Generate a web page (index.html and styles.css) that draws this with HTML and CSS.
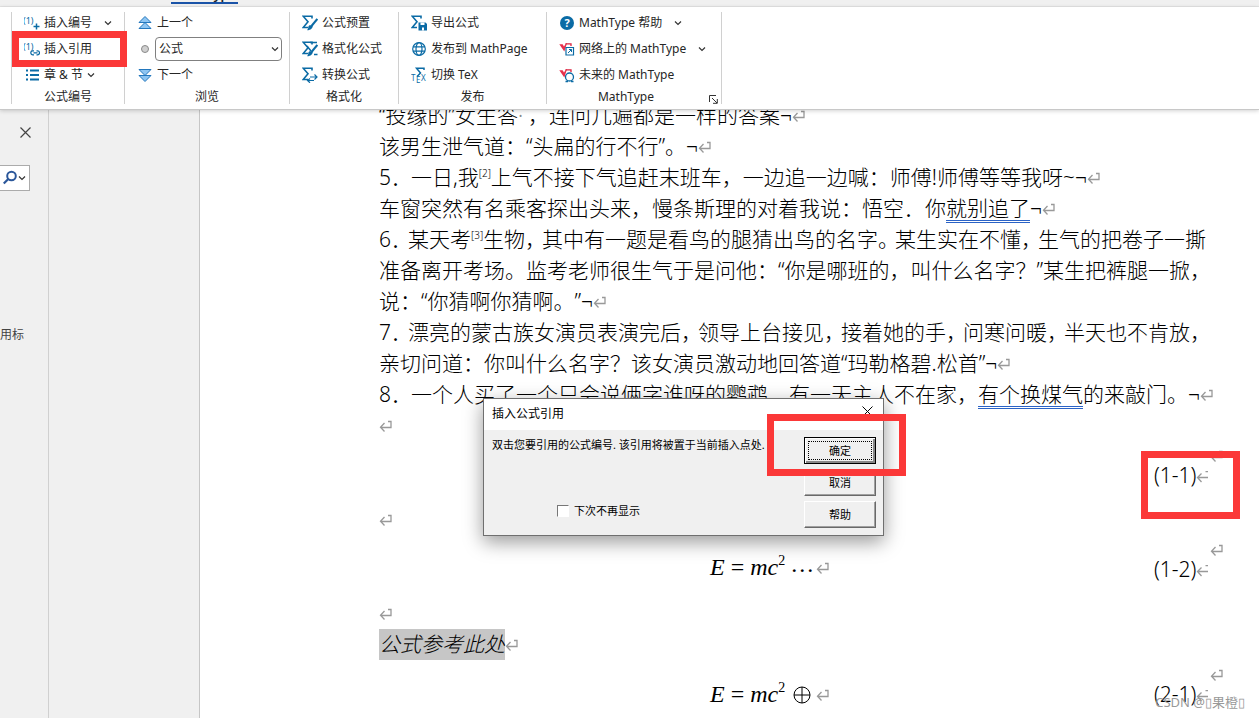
FILE: index.html
```
<!DOCTYPE html>
<html lang="zh-CN">
<head>
  <meta charset="UTF-8">
  <meta name="viewport" content="width=device-width, initial-scale=1.0">
  <title>插入公式引用</title>
  <link rel="stylesheet" href="styles.css">
</head>
<body>
  <!-- shared icon shapes -->
  <svg class="defs" aria-hidden="true">
    <symbol id="chevron" viewBox="0 0 8 8"><path d="M1 2.5 4 5.5 7 2.5" fill="none" stroke="#333" stroke-width="1.2"/></symbol>
    <symbol id="return" viewBox="0 0 13 13"><path d="M9 1.5h3v6H1.5M5.5 3 1.5 7.3 5.5 11.5" fill="none" stroke="#999" stroke-width="1.3"/></symbol>
    <symbol id="cell-end" viewBox="0 0 13 13"><path d="M12 7.5H1.5M5.5 3.5 1.5 7.5 5.5 12M9.5 1.7h2.5" fill="none" stroke="#999" stroke-width="1.3"/></symbol>
    <symbol id="sigma" viewBox="0 0 16 16"><path d="M10 3.5V1.2H1.2L6 6.8 1.2 12.5H6" fill="none" stroke="#0b6ba5" stroke-width="1.6"/></symbol>
    <symbol id="brush" viewBox="0 0 16 16"><path d="M15.3 4 9.5 11" stroke="#0b6ba5" stroke-width="2"/><path d="M9.8 10.3c1.6 1 .8 2.4-.6 3.8-1.5 1.3-3.2 1.2-4.2.9C7 14 5.5 11.5 7.5 10.3z" fill="#0b6ba5"/></symbol>
    <symbol id="root" viewBox="0 0 16 16"><path d="M.3 3.2H3.6L5 5.5 7 2.2H8L5.300 10.500z" fill="#e8304c"/><path d="M6.500 2.800H12V5" fill="none" stroke="#dc2440" stroke-width="1.300"/></symbol>
  </svg>

  <nav class="tabs"><a href="#" class="tab">MathType</a></nav>

  <header class="ribbon">
    <section class="group numbering">
      <button class="cmd">
        <svg class="icon" viewBox="0 0 16 16"><text x="-1" y="9" class="glyph">(1)</text><path d="M12.500 8.500v6M9.500 11.500h6" stroke="#0b6ba5" stroke-width="1.500"/></svg>
        <span>插入编号</span><svg class="chevron far"><use href="#chevron"/></svg>
      </button>
      <button class="cmd">
        <svg class="icon" viewBox="0 0 16 16"><text x="-1" y="9" class="glyph">(1)</text><path d="M10 13.800H8.800a2 2 0 0 1 0-4H10M12.500 9.800h1a2 2 0 0 1 0 4h-1M9.500 11.800h4" fill="none" stroke="#0b6ba5" stroke-width="1.200"/></svg>
        <span>插入引用</span>
        <span class="callout callout-cmd"></span>
      </button>
      <button class="cmd">
        <svg class="icon" viewBox="0 0 16 16"><path d="M2 3.500h2M2 8h2M2 12.500h2M6 3.500h9M6 8h9M6 12.500h9" stroke="#0b6ba5" stroke-width="1.800"/></svg>
        <span>章 &amp; 节</span><svg class="chevron"><use href="#chevron"/></svg>
      </button>
      <h2>公式编号</h2>
    </section>

    <section class="group browse">
      <button class="cmd">
        <svg class="icon" viewBox="0 0 16 16"><path d="M8 1.500 14 7.500H2zM8 7.500 14 13.500H2z" fill="#8ec5f2" stroke="#2377bd"/></svg>
        <span>上一个</span>
      </button>
      <div class="cmd pick">
        <svg class="icon" viewBox="0 0 16 16"><circle cx="8" cy="8" r="3.500" fill="#d0d0d0" stroke="#8a8a8a"/></svg>
        <select aria-label="浏览对象"><option>公式</option></select>
        <svg class="chevron"><use href="#chevron"/></svg>
      </div>
      <button class="cmd">
        <svg class="icon" viewBox="0 0 16 16"><path d="M2 2.500H14L8 8.500zM2 8.500H14L8 14.500z" fill="#8ec5f2" stroke="#2377bd"/></svg>
        <span>下一个</span>
      </button>
      <h2>浏览</h2>
    </section>

    <section class="group format">
      <button class="cmd">
        <svg class="icon" viewBox="0 0 16 16"><use href="#sigma"/><use href="#brush"/></svg>
        <span>公式预置</span>
      </button>
      <button class="cmd">
        <svg class="icon" viewBox="0 0 16 16"><use href="#sigma"/><path d="M8 1.500h7M12 13.500h3.500M5 5l4 5" stroke="#0b6ba5" stroke-width="1.500"/><use href="#brush"/></svg>
        <span>格式化公式</span>
      </button>
      <button class="cmd">
        <svg class="icon" viewBox="0 0 16 16"><use href="#sigma"/><path d="M8 10h7M12.500 7.500 15 10l-2.500 2.500M12 13.500H5.500M8 11.500l-2.500 2 2.500 2.300" fill="none" stroke="#0b6ba5" stroke-width="1.200"/></svg>
        <span>转换公式</span>
      </button>
      <h2>格式化</h2>
    </section>

    <section class="group publish">
      <button class="cmd">
        <svg class="icon" viewBox="0 0 16 16"><use href="#sigma"/><path d="M7.500 7.500h7l1.500 1.500v6.500H7.500z" fill="#0b6ba5"/><path d="M9.500 7.500h4v2.500h-4zM11 12.500h2v3h-2z" fill="#fff"/></svg>
        <span>导出公式</span>
      </button>
      <button class="cmd">
        <svg class="icon" viewBox="0 0 16 16"><g fill="none" stroke="#0b6ba5" stroke-width="1.200"><circle cx="8" cy="8" r="6.300"/><ellipse cx="8" cy="8" rx="3" ry="6.300"/><path d="M2 5.800h12M2 10.200h12"/></g></svg>
        <span>发布到 MathPage</span>
      </button>
      <button class="cmd">
        <svg class="icon" viewBox="0 0 16 16"><path d="M13 3V1.200H5.500l4 4.800-3.500 3.500" fill="none" stroke="#0b6ba5" stroke-width="1.500"/><text x="0" y="14" class="glyph tex">T</text><text x="5" y="16" class="glyph tex">E</text><text x="10" y="14" class="glyph tex">X</text></svg>
        <span>切换 TeX</span>
      </button>
      <h2>发布</h2>
    </section>

    <section class="group help">
      <button class="cmd">
        <svg class="icon" viewBox="0 0 16 16"><circle cx="8" cy="8" r="7" fill="#0b6ba5"/><text x="8" y="12" text-anchor="middle" class="question">?</text></svg>
        <span>MathType 帮助</span><svg class="chevron far"><use href="#chevron"/></svg>
      </button>
      <button class="cmd">
        <svg class="icon" viewBox="0 0 16 16"><use href="#root"/><path d="M7 6.500h7.500V14H7z" fill="#fff" stroke="#0b6ba5" stroke-width="1.200"/><path d="M9 12 12.500 8.500M10 8.500h2.500v2.500" fill="none" stroke="#0b6ba5"/></svg>
        <span>网络上的 MathType</span><svg class="chevron far"><use href="#chevron"/></svg>
      </button>
      <button class="cmd">
        <svg class="icon" viewBox="0 0 16 16"><use href="#root"/><circle cx="10.500" cy="10" r="4" fill="#fff" stroke="#0b6ba5" stroke-width="1.300"/><path d="M6.500 14.500h2.500M12 14.500h2.500" stroke="#0b6ba5" stroke-width="1.400"/></svg>
        <span>未来的 MathType</span>
      </button>
      <h2>MathType</h2>
      <svg class="launcher" viewBox="0 0 9 9"><path d="M.5 7V.5H7M3 3l5 5M8.300 4v4.300H4" fill="none" stroke="#333"/></svg>
    </section>
  </header>

  <main class="workspace">
    <aside class="nav-pane">
      <button class="close" aria-label="关闭"><svg viewBox="0 0 11 11"><path d="M.5.5l10 10M10.500.5l-10 10" stroke="#444" stroke-width="1.200"/></svg></button>
      <button class="search" aria-label="搜索">
        <svg class="icon" viewBox="0 0 16 16"><circle cx="9.500" cy="6" r="4.300" fill="none" stroke="#2b579a" stroke-width="2"/><path d="M6.300 9 1.800 13.500" stroke="#2b579a" stroke-width="2.200"/></svg>
        <svg class="chevron"><use href="#chevron"/></svg>
      </button>
      <p>用标</p>
    </aside>
    <div class="gutter"></div>

    <article class="page">
      <p>“投缘的”女生答<span class="dot">·</span>，连问几遍都是一样的答案¬<svg class="mark"><use href="#return"/></svg></p>
      <p>该男生泄气道：“头扁的行不行”。¬<svg class="mark"><use href="#return"/></svg></p>
      <p><span class="num">5．</span>一日,我<sup>[2]</sup>上气不接下气追赶末班车，一边追一边喊：师傅!师傅等等我呀~¬<svg class="mark"><use href="#return"/></svg></p>
      <p>车窗突然有名乘客探出头来，慢条斯理的对着我说：悟空．你<u>就别追了</u>¬<svg class="mark"><use href="#return"/></svg></p>
      <p><span class="num tight">6．</span>某天考<sup>[3]</sup>生物<span class="stop">，</span>其中有一题是看鸟的腿猜出鸟的名字<span class="stop">。</span>某生实在不懂<span class="stop">，</span>生气的把卷子一撕</p>
      <p>准备离开考场。监考老师很生气于是问他：“你是哪班的，叫什么名字？”某生把裤腿一掀，</p>
      <p>说：“你猜啊你猜啊。”¬<svg class="mark"><use href="#return"/></svg></p>
      <p><span class="num tight">7．</span>漂亮的蒙古族女演员表演完后<span class="stop">，</span>领导上台接见<span class="stop">，</span>接着她的手<span class="stop">，</span>问寒问暖<span class="stop">，</span>半天也不肯放<span class="stop">，</span></p>
      <p>亲切问道：你叫什么名字？该女演员激动地回答道“玛勒格碧.松首”¬<svg class="mark"><use href="#return"/></svg></p>
      <p><span class="num">8．</span>一个人买了一个只会说俩字谁呀的鹦鹉，有一天主人不在家，<u>有个换煤气</u>的来敲门。¬<svg class="mark"><use href="#return"/></svg></p>
      <p><svg class="mark"><use href="#return"/></svg></p>
      <div class="equation">
        <span></span>
        <span class="number">(1-1)<svg class="mark"><use href="#cell-end"/></svg></span>
        <svg class="mark row-end"><use href="#return"/></svg>
        <span class="callout callout-number"></span>
      </div>
      <p><svg class="mark"><use href="#return"/></svg></p>
      <div class="equation">
        <span class="formula"><i>E</i> = <i>mc</i><sup>2</sup><span class="dots">···</span><svg class="mark"><use href="#return"/></svg></span>
        <span class="number">(1-2)<svg class="mark"><use href="#cell-end"/></svg></span>
        <svg class="mark row-end"><use href="#return"/></svg>
      </div>
      <p><svg class="mark"><use href="#return"/></svg></p>
      <p><mark>公式参考此处</mark><svg class="mark"><use href="#return"/></svg></p>
      <div class="equation">
        <span class="formula"><i>E</i> = <i>mc</i><sup>2</sup><svg class="oplus" viewBox="0 0 18 18"><path d="M9 1v16M1 9h16" stroke="#000"/><circle cx="9" cy="9" r="8" fill="none" stroke="#000"/></svg><svg class="mark"><use href="#return"/></svg></span>
        <span class="number">(2-1)<svg class="mark"><use href="#cell-end"/></svg></span>
        <svg class="mark row-end"><use href="#return"/></svg>
      </div>
    </article>

    <div class="dialog" role="dialog" aria-labelledby="dialog-title">
      <div class="title-bar">
        <h1 id="dialog-title">插入公式引用</h1>
        <button class="close" aria-label="关闭"><svg viewBox="0 0 11 11"><path d="M.5.5l10 10M10.500.5l-10 10" stroke="#000"/></svg></button>
      </div>
      <div class="dialog-body">
        <div class="message">
          <p>双击您要引用的公式编号. 该引用将被置于当前插入点处.</p>
          <label><input type="checkbox"> 下次不再显示</label>
        </div>
        <div class="actions">
          <button class="default">确定</button>
          <button>取消</button>
          <button>帮助</button>
        </div>
      </div>
      <span class="callout callout-ok"></span>
    </div>

    <div class="watermark">CSDN @▯果橙▯</div>
  </main>
</body>
</html>
```
FILE: styles.css
```
* {
  box-sizing: border-box;
}
body {
  margin: 0;
  height: 100vh;
  display: flex;
  flex-direction: column;
  overflow: hidden;
  background: #fff;
  color: #262626;
  font: 12px/16px "Noto Sans", "Noto Sans CJK SC", sans-serif;
}
h1, h2, p {
  margin: 0;
  font-size: inherit;
  font-weight: normal;
}
button {
  border: 0;
  padding: 0;
  background: none;
  color: inherit;
  font: inherit;
}
.defs {
  position: absolute;
  width: 0;
  height: 0;
}
.icon {
  width: 16px;
  height: 16px;
  flex: none;
}
.chevron {
  width: 8px;
  height: 8px;
  flex: none;
}
.chevron.far {
  margin-left: 8px;
}
.glyph {
  fill: #0b6ba5;
  font-size: 9px;
}
.glyph.tex {
  font-size: 8px;
}
.question {
  fill: #fff;
  font-size: 11px;
  font-weight: bold;
}

/* red highlight frames */
.callout {
  position: absolute;
  border: 7px solid #fb3838;
  pointer-events: none;
  z-index: 3;
}
.callout-cmd {
  left: 0;
  right: -3px;
  top: -5px;
  bottom: -5px;
}
.callout-number {
  right: 19px;
  top: 10px;
  width: 99px;
  height: 68px;
}
.callout-ok {
  right: -23px;
  top: 15px;
  width: 139px;
  height: 62px;
}

/* ribbon */
.tabs {
  display: flex;
  align-items: flex-end;
  height: 7px;
  padding: 0 171px 2px;
  overflow: hidden;
  flex: none;
  background: #f0f0f0;
  border-bottom: 1px solid #e4e4e4;
}
.tab {
  border-bottom: 2px solid #1b54a8;
  padding: 0 2px;
  color: #262626;
  font-size: 13px;
  font-weight: 600;
  line-height: 16px;
  text-decoration: none;
}
.ribbon {
  position: relative;
  z-index: 1;
  display: flex;
  flex: none;
  padding: 5px 11px;
  border-bottom: 1px solid #c8c8c8;
  box-shadow: 0 1px 4px rgba(0, 0, 0, 0.18);
  background: #fff;
}
.group {
  position: relative;
  height: 92px;
  border-left: 1px solid #d0d0d0;
}
.group:last-child {
  border-right: 1px solid #d0d0d0;
}
.numbering {
  width: 113px;
}
.browse {
  width: 165px;
}
.format {
  width: 109px;
}
.publish {
  width: 148px;
}
.help {
  width: 176px;
}
.cmd {
  position: relative;
  display: flex;
  align-items: center;
  gap: 4px;
  width: 100%;
  height: 26px;
  padding-left: 12px;
  white-space: nowrap;
  top: -2px;
}
.group h2 {
  position: relative;
  top: -1px;
  text-align: center;
}
.help h2 {
  padding-right: 16px;
}
.pick {
  gap: 2px;
  padding-right: 7px;
}
.pick select {
  flex: 1;
  height: 24px;
  padding: 0 3px;
  border: 1px solid #808080;
  border-radius: 4px;
  appearance: none;
  background: #fff;
  color: inherit;
  font: inherit;
}
.pick .chevron {
  position: absolute;
  right: 10px;
}
.launcher {
  position: absolute;
  right: 3px;
  bottom: 0;
  width: 9px;
  height: 9px;
}

/* document area */
.workspace {
  position: relative;
  display: flex;
  flex: 1;
  min-height: 0;
}
.nav-pane {
  width: 49px;
  flex: none;
  border-right: 1px solid #d0d0d0;
  background: #f0f0f0;
  color: #444;
}
.close {
  display: block;
  width: 11px;
  height: 11px;
}
.close svg {
  display: block;
}
.nav-pane .close {
  margin: 17px 0 0 20px;
}
.nav-pane .search {
  display: flex;
  align-items: center;
  width: 30px;
  height: 26px;
  margin: 27px 0 136px;
  padding-left: 2px;
  border: 1px solid #ababab;
  border-left: 0;
  background: #fff;
}
.gutter {
  width: 151px;
  flex: none;
  border-right: 1px solid #c6c6c6;
  background: #f0f0f0;
}
.page {
  flex: 1;
  min-width: 0;
  overflow: hidden;
  padding-left: 179px;
  color: #000;
  font-family: "Noto Sans", "Noto Sans CJK SC Light", "Noto Sans CJK SC DemiLight", "Noto Sans CJK SC", sans-serif;
  font-size: 21px;
  font-weight: 300;
  line-height: 31px;
  text-spacing-trim: space-all;
}
.page > p {
  height: 31px;
  font-weight: 300;
  white-space: nowrap;
}
.page > p:first-child {
  margin-top: -10px;
}
.page p sup {
  display: inline-block;
  width: 12px;
  font-size: 10px;
  line-height: 10px;
  vertical-align: 8px;
}
.page u {
  text-decoration: underline double #2b63c6 1px;
  text-underline-offset: 4px;
}
.num {
  display: inline-block;
  width: 32px;
}
.num.tight {
  width: 29px;
}
.stop {
  display: inline-block;
  width: 17px;
}
.dot {
  display: inline-block;
  width: 10px;
  color: #888;
}
.mark {
  width: 13px;
  height: 13px;
}
.page mark {
  display: inline-block;
  background: #c6c6c6;
  font-style: italic;
}
.equation {
  position: relative;
  display: grid;
  grid-template-columns: 331px 1fr 105px;
  align-items: center;
  height: 63px;
  padding-top: 5px;
}
.equation > :first-child {
  grid-column: 2;
}
.formula {
  font-family: "Liberation Serif", serif;
  font-size: 24px;
}
.formula sup {
  font-size: 14px;
  line-height: 14px;
  vertical-align: 10px;
}
.dots {
  margin: 0 2px 0 5px;
  vertical-align: -3px;
}
.oplus {
  width: 18px;
  height: 18px;
  margin: 0 5px 0 8px;
  vertical-align: -2px;
}
.row-end {
  position: absolute;
  right: 36px;
  top: 9px;
}

/* dialog */
.dialog {
  position: absolute;
  z-index: 2;
  left: 483px;
  top: 288px;
  width: 401px;
  border: 1px solid #6f6f6f;
  background: #f0f0f0;
  box-shadow: 0 6px 18px rgba(0, 0, 0, 0.4);
  color: #000;
}
.title-bar {
  display: flex;
  justify-content: space-between;
  height: 31px;
  padding: 7px 10px 0 8px;
  background: #fff;
}
.dialog-body {
  display: flex;
  justify-content: space-between;
  padding: 7px 7px 7px 8px;
  font-size: 11px;
}
.message {
  white-space: nowrap;
}
.message label {
  display: flex;
  align-items: center;
  gap: 5px;
  margin: 50px 0 0 65px;
}
.message input {
  appearance: none;
  width: 12px;
  height: 12px;
  margin: 0;
  border: 1px solid #fff;
  border-color: #777 #fff #fff #777;
  background: #fff;
}
.actions {
  display: flex;
  flex-direction: column;
  gap: 5px;
}
.actions button {
  width: 72px;
  height: 27px;
  border: 1px solid;
  border-color: #fff #696969 #696969 #fff;
  box-shadow: inset -1px -1px #a0a0a0;
}
.actions .default {
  border-color: #000;
  box-shadow: inset 1px 1px #fff, inset -2px -2px #888;
  outline: 1px dotted #000;
  outline-offset: -5px;
}

.watermark {
  position: absolute;
  right: 14px;
  bottom: 6px;
  color: #999;
  font-size: 13px;
  line-height: 20px;
}
```
